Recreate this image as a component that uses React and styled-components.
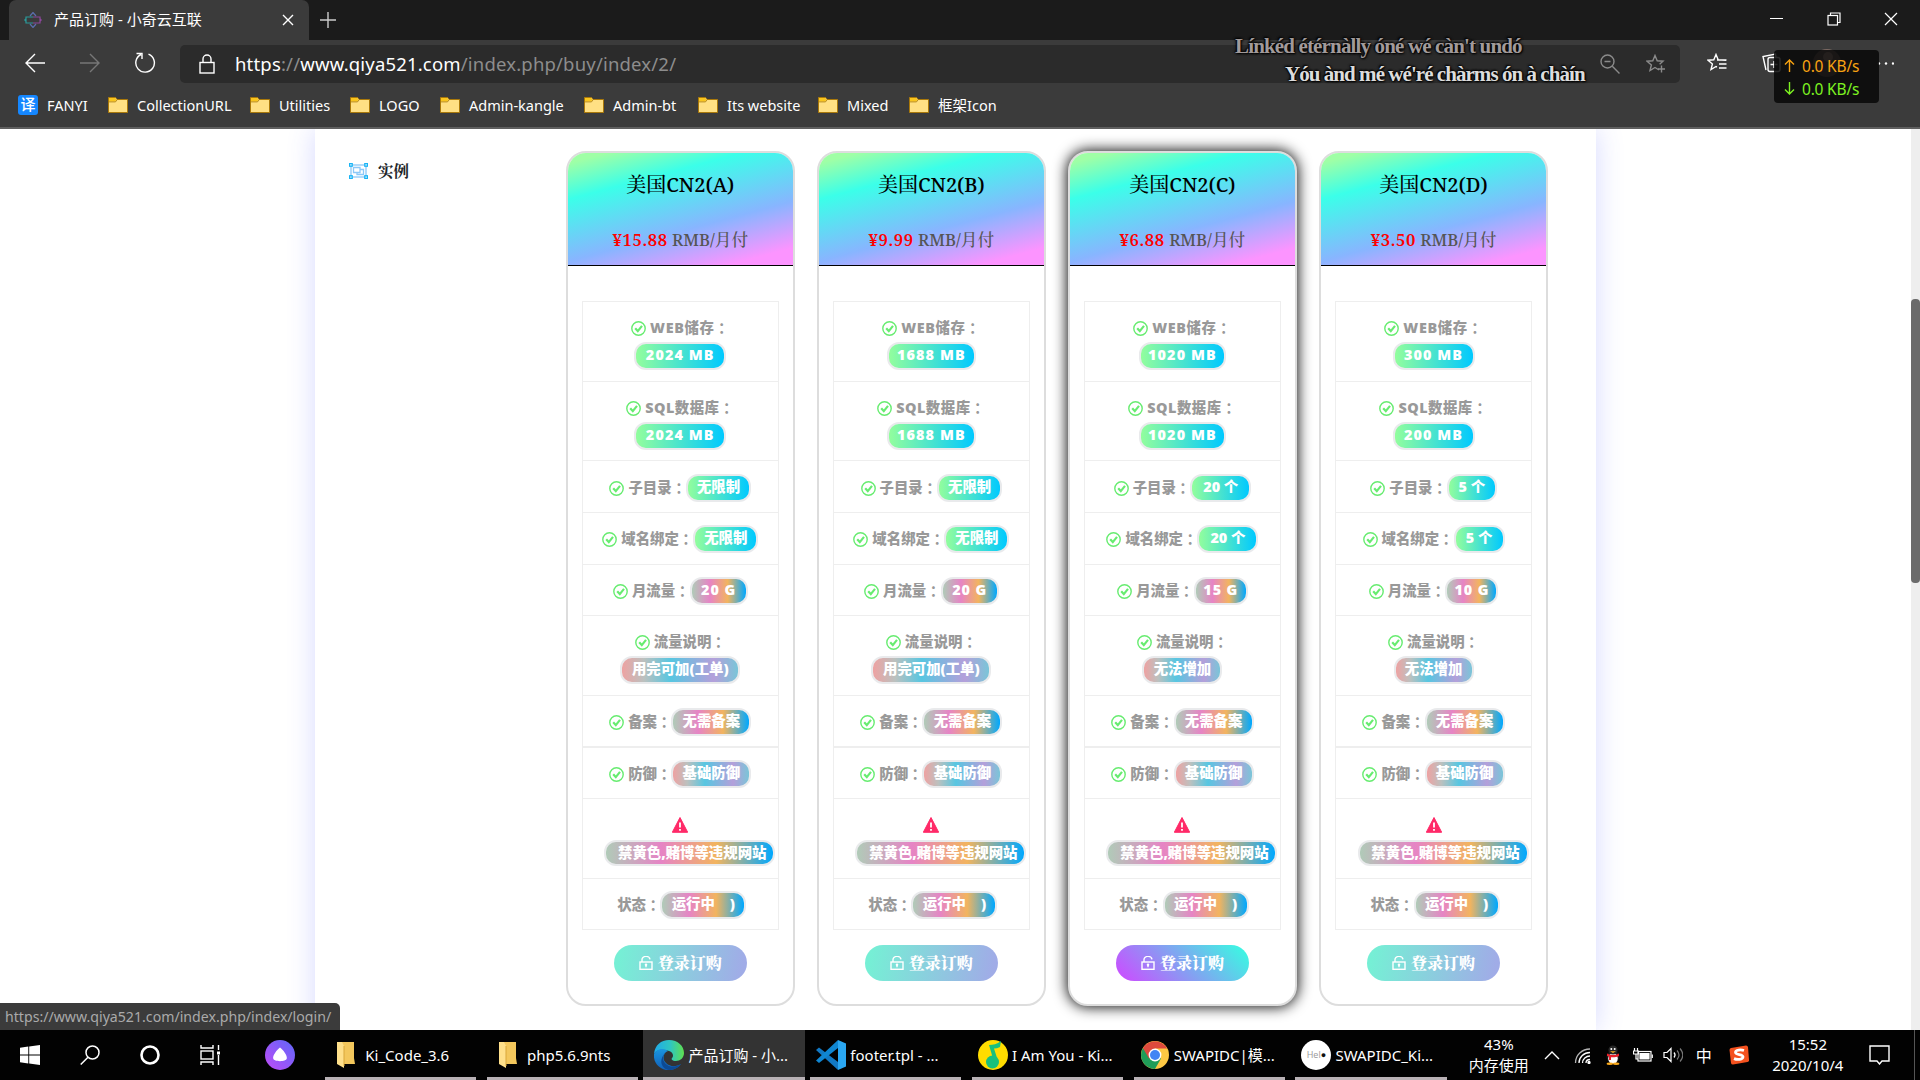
import React from 'react';
import styled, { createGlobalStyle, css } from 'styled-components';

const ui = '"Noto Sans", "Noto Sans CJK SC", sans-serif';
const serif = '"Noto Serif", "Noto Serif CJK SC", "Liberation Serif", "Noto Sans CJK SC", serif';

const GlobalStyle = createGlobalStyle`
  * { box-sizing: border-box; }
  body { margin: 0; background: #fff; font-family: ${ui}; overflow: hidden; }
  svg { display: block; flex: none; }
`;

const Screen = styled.div`
  position: relative;
  width: 1920px;
  height: 1080px;
  display: flex;
  flex-direction: column;
  overflow: hidden;
`;

/* ---------- browser chrome ---------- */
const TabStrip = styled.div`
  height: 40px;
  flex: none;
  background: #1b1b1b;
  display: flex;
  padding-left: 9px;
`;
const Tab = styled.div`
  width: 300px;
  background: #3b3b3b;
  border-radius: 7px 7px 0 0;
  display: flex;
  align-items: center;
  padding: 0 15px 0 15px;
`;
const TabTitle = styled.span`
  flex: 1;
  margin-left: 12px;
  font-size: 15px;
  line-height: 20px;
  color: #fff;
  padding-bottom: 2px;
`;
const NewTab = styled.div`
  width: 38px;
  display: flex;
  align-items: center;
  justify-content: center;
  padding-bottom: 1px;
`;
const WindowButtons = styled.div`
  margin: 0 1px 0 auto;
  display: flex;
`;
const WindowButton = styled.div`
  width: 57px;
  height: 37px;
  display: flex;
  align-items: center;
  justify-content: center;
`;
const Toolbar = styled.div`
  height: 46px;
  flex: none;
  background: #3b3b3b;
  display: flex;
  align-items: center;
  padding-left: 7px;
`;
const ToolButton = styled.div`
  width: 55px;
  flex: none;
  height: 38px;
  display: flex;
  align-items: center;
  justify-content: center;
`;
const AddressBar = styled.div`
  width: 1500px;
  flex: none;
  height: 38px;
  margin: 2px 9px 0 8px;
  background: #2b2b2b;
  border-radius: 5px;
  display: flex;
  align-items: center;
  padding: 0 1px 0 19px;
`;
const Url = styled.span`
  flex: 1;
  margin-left: 20px;
  font-size: 18.5px;
  line-height: 36px;
  letter-spacing: 0.18px;
  color: #8d8d8d;
  b { font-weight: 400; color: #fff; }
`;
const AddressIcon = styled.div`
  width: 46px;
  display: flex;
  justify-content: center;
`;
const Bookmarks = styled.div`
  height: 43px;
  flex: none;
  background: #3b3b3b;
  border-bottom: 2px solid #5f5f5f;
  display: flex;
  padding: 0 0 4px 18px;
`;
const Bookmark = styled.div`
  width: ${(p) => p.$width}px;
  display: flex;
  align-items: center;
  gap: 9px;
  color: #fff;
  font-size: 14.5px;
  white-space: nowrap;
`;
const Translate = styled.span`
  width: 20px;
  height: 20px;
  border-radius: 3px;
  background: #1587ff;
  font-size: 15px;
  line-height: 19px;
  font-weight: 500;
  text-align: center;
`;

/* ---------- page ---------- */
const Page = styled.div`
  height: 901px;
  flex: none;
  display: flex;
  justify-content: space-between;
  background: #fff;
  padding-left: 315px;
  overflow: hidden;
`;
const Panel = styled.main`
  width: 1281px;
  height: 901px;
  padding: 22px 0 0 34px;
  display: flex;
  background: #fff;
  box-shadow: 0 0 26px rgba(70, 80, 255, 0.22);
  clip-path: inset(0 -40px);
`;
const SideLabel = styled.div`
  width: 217px;
  height: 40px;
  display: flex;
  align-items: center;
  gap: 10px;
  font: 700 15.5px/20px ${serif};
  color: #212529;
`;
const Plans = styled.div`
  display: grid;
  grid-template-columns: repeat(4, 228.5px);
  column-gap: 22.6px;
  align-items: start;
`;
const Card = styled.section`
  height: 855px;
  border: 2px solid #ddd;
  border-radius: 20px;
  background: #fff;
  overflow: hidden;
  display: flex;
  flex-direction: column;
  align-items: center;
  ${(p) => p.$active && css`box-shadow: 0 0 14px 1px rgba(0, 0, 0, 0.95);`}
`;
const CardHead = styled.header`
  align-self: stretch;
  height: 113px;
  border-bottom: 1px solid #000;
  background: linear-gradient(165deg, #9fffa6 6%, #3bffe9 27%, #88b5ff 63%, #fc94ff 90%);
  text-align: center;
`;
const PlanName = styled.h3`
  margin: 19px 0 0;
  font: 500 20px/26px ${serif};
  color: #000;
`;
const Price = styled.div`
  margin-top: 30px;
  font: 500 16.7px/24px ${serif};
  color: #555;
  b { font-weight: 600; color: #f00; letter-spacing: 0.6px; }
`;
const Specs = styled.div`
  width: 197px;
  margin-top: 35px;
  border: 1px solid #eee;
  border-bottom: 0;
`;
const Row = styled.div`
  height: ${(p) => p.$height}px;
  padding-top: ${(p) => p.$top}px;
  border-bottom: ${(p) => (p.$thick ? 2 : 1)}px solid #eee;
  display: flex;
  flex-direction: ${(p) => (p.$stacked ? 'column' : 'row')};
  align-items: ${(p) => (p.$stacked ? 'center' : 'flex-start')};
  justify-content: ${(p) => (p.$stacked ? 'flex-start' : 'center')};
`;
const Label = styled.div`
  height: 28px;
  display: flex;
  align-items: center;
  font: 900 14.4px/26px "Noto Sans", "Noto Sans CJK SC", sans-serif;
  letter-spacing: ${(p) => p.$spacing || 0}px;
  color: #999;
  white-space: nowrap;
  margin-left: ${(p) => p.$indent || 0}px;
  i { font-style: normal; font-family: "Noto Sans CJK TC", sans-serif; font-weight: 700; }
`;
const CheckMark = styled.span`
  margin-right: 4px;
`;
const tones = {
  green: 'linear-gradient(to right, #92fe9d, #00c9ff)',
  warm: 'linear-gradient(to right, #b0cbb8 0%, #e684c5 33%, #f2b45f 66%, #00a8ff 100%)',
  cool: 'linear-gradient(to right, #eea2a2 0%, #bbc1bf 19%, #57c6e1 42%, #b49fda 79%, #7ac5d8 100%)',
};
const Pill = styled.span`
  width: ${(p) => p.$width}px;
  height: ${(p) => (p.$shifted ? 26 : 28)}px;
  margin: ${(p) => (p.$shifted ? '1px 0 0 19px' : '0')};
  padding-left: ${(p) => (p.$shifted ? 5 : 0)}px;
  border: 2px solid #e9eaec;
  border-radius: 12px;
  background: ${(p) => tones[p.$tone]};
  color: #fff;
  font: 900 14.4px/22px "Noto Sans", "Noto Sans CJK SC", sans-serif;
  letter-spacing: ${(p) => p.$spacing || 0}px;
  text-align: center;
  white-space: pre;
  flex: none;
`;
const Order = styled.button`
  width: 133px;
  height: 36px;
  margin-top: 15px;
  border: 0;
  border-radius: 18px;
  background: ${(p) => (p.$active
    ? 'linear-gradient(45deg, #c850ff 5%, #3cf7e3 95%)'
    : 'linear-gradient(100deg, #76efd5 5%, #a0ace7 95%)')};
  color: #fff;
  font: 900 16px/36px ${serif};
  display: flex;
  align-items: center;
  justify-content: center;
  gap: 5px;
  padding: 0;
`;
const ScrollTrack = styled.div`
  width: 9px;
  background: #eee;
  padding-top: 170px;
`;
const ScrollThumb = styled.div`
  height: 284px;
  border-radius: 4px;
  background: #6b6b6b;
`;

/* ---------- floating overlays ---------- */
const Lyric = styled.div`
  position: absolute;
  left: ${(p) => p.$left}px;
  top: ${(p) => p.$top}px;
  font: 700 21px/26px "Liberation Serif", serif;
  letter-spacing: ${(p) => p.$spacing}px;
  color: ${(p) => p.$color};
  text-shadow: 0 0 3px #000, 1px 1px 2px #000, -1px -1px 2px #000;
  white-space: nowrap;
`;
const NetMeter = styled.div`
  position: absolute;
  left: 1774px;
  top: 50px;
  width: 105px;
  height: 53px;
  border-radius: 4px;
  background: rgba(8, 8, 8, 0.86);
  padding: 4px 0 0 10px;
`;
const NetRow = styled.div`
  height: 23px;
  display: flex;
  align-items: center;
  gap: 7px;
  color: ${(p) => p.$color};
  font-size: 15.5px;
  letter-spacing: -0.2px;
`;
const StatusBubble = styled.div`
  position: absolute;
  left: 0;
  top: 1003px;
  width: 340px;
  height: 27px;
  padding-left: 5px;
  background: #3b3b3b;
  border-radius: 0 5px 0 0;
  color: #aaa;
  font-size: 14.15px;
  line-height: 27px;
  white-space: nowrap;
`;

/* ---------- taskbar ---------- */
const Taskbar = styled.div`
  height: 50px;
  flex: none;
  background: #020202;
  display: flex;
  color: #fff;
`;
const SystemButton = styled.div`
  width: ${(p) => p.$width || 60}px;
  flex: none;
  display: flex;
  align-items: center;
  justify-content: center;
`;
const Task = styled.div`
  width: 161.7px;
  flex: none;
  padding: ${(p) => (p.$active ? 0 : '0 5.3px')};
  background: ${(p) => (p.$active ? '#333' : 'transparent')};
`;
const TaskInner = styled.div`
  height: 50px;
  border-bottom: 3px solid #b8b1b5;
  padding: 2px 0 0 ${(p) => (p.$active ? 11 : 6)}px;
  display: flex;
  align-items: center;
  gap: 4px;
  font-size: 15px;
  white-space: nowrap;
`;
const TaskIcon = styled.span`
  width: 30px;
  display: flex;
  justify-content: center;
`;
const HelloBadge = styled.span`
  width: 30px;
  height: 30px;
  border-radius: 50%;
  background: #fff;
  color: #999;
  font: 9px/30px "Open Sans", sans-serif;
  text-align: center;
  b { color: #111; }
`;
const Tray = styled.div`
  flex: none;
  display: flex;
  align-items: center;
  padding-left: 16px;
`;
const Stack = styled.div`
  width: ${(p) => p.$width}px;
  display: flex;
  flex-direction: column;
  text-align: center;
  font-size: 15px;
  line-height: 21px;
`;
const TrayCell = styled.div`
  width: ${(p) => p.$width || 30}px;
  display: flex;
  justify-content: center;
  font-size: 16px;
`;
const DesktopEdge = styled.div`
  margin-left: 6px;
  width: 1px;
  height: 50px;
  background: #555;
`;

/* ---------- drawings ---------- */
const Line = ({ w = 20, h = w, box = `0 0 ${w} ${h}`, color = '#fff', sw = 1.4, d, children }) => (
  <svg width={w} height={h} viewBox={box} fill="none" stroke={color} strokeWidth={sw}>
    {d && <path d={d} />}
    {children}
  </svg>
);
const Folder = () => (
  <svg width="20" height="16" viewBox="0 0 20 16">
    <path d="M.5.5h7l1.500 2h10.500v13H.5z" fill="#ffe084" stroke="#a9780a" />
    <path d="M1 1h6.300l1 2-1 1.600H1z" fill="#f9c51e" />
    <path d="M.5 4.900h7l1.500-2" fill="none" stroke="#a9780a" strokeWidth=".8" />
  </svg>
);
const TaskFolder = () => (
  <svg width="18" height="26" viewBox="0 0 18 26">
    <path d="M4 0h13v16l1 6H4z" fill="#f3c75c" />
    <path d="M0 0h5l2 4v22L0 22z" fill="#ffe08b" />
    <path d="M7 4v20" stroke="#d9a83a" />
  </svg>
);
const Check = () => (
  <svg width="15" height="15" viewBox="0 0 15 15" fill="none" stroke="#67ec70">
    <circle cx="7.500" cy="7.500" r="6.700" strokeWidth="1.400" />
    <path d="M4.200 7.300l2.600 2.800 4.200-5.200" strokeWidth="2.200" />
  </svg>
);
const Warning = () => (
  <svg width="16" height="16" viewBox="0 0 16 16">
    <path d="M8 .5L15.700 15.300H.3z" fill="#ff2a68" stroke="#ff2a68" strokeLinejoin="round" />
    <path d="M8 5.500v5M8 12v1.800" stroke="#fff" strokeWidth="1.800" />
  </svg>
);
const Unlock = () => (
  <Line w={14} h={14} sw={1.4}>
    <rect x="1" y="6" width="12" height="7.300" />
    <path d="M3 6V4a4 3.300 0 0 1 8-.6M7 8.700v2.500" />
    <circle cx="7" cy="8.800" r=".6" />
  </Line>
);
const GroupIcon = () => (
  <Line w={19} h={16} color="#8cc8f8" sw={1.3}>
    <rect x="2" y="2" width="15" height="12" />
    <path d="M4.500 4.500h6.500v5H4.500zM11 6.500h3.500v5H8V9.500" />
    <g stroke="#19b4f5" fill="#fff">
      <rect x=".6" y=".6" width="2.600" height="2.600" /><rect x="15.800" y=".6" width="2.600" height="2.600" />
      <rect x=".6" y="12.800" width="2.600" height="2.600" /><rect x="15.800" y="12.800" width="2.600" height="2.600" />
    </g>
  </Line>
);

const EdgeLogo = () => (
  <svg width="30" height="30" viewBox="0 0 30 30">
    <defs>
      <linearGradient id="eg" x1="0" x2="1"><stop offset="0" stopColor="#1fa9ea" /><stop offset=".55" stopColor="#2fc6c0" /><stop offset="1" stopColor="#5fe04f" /></linearGradient>
      <linearGradient id="eb" y1="0" y2="1" x1="0" x2="0"><stop offset="0" stopColor="#1a95e0" /><stop offset="1" stopColor="#1160b8" /></linearGradient>
    </defs>
    <path d="M0 14C1 5 7 0 15 0c9 0 15 6 15 13 0 5-4 8-8 8-4 0-5-2-4-3 2-2 1-6-3-7C9 9 3 9 0 14z" fill="url(#eg)" />
    <path d="M0 14c3-6 10-6 14-3-5 2-6 8-2 12 4 4 10 4 15 1-3 4-8 6-12 6C6 30-1 23 0 14z" fill="url(#eb)" />
    <path d="M11 13c-4 5-1 11 4 13 4 1.500 9 0 12-2-3 4-8 6-12 6-7-1-11-9-4-17z" fill="#0c4a94" />
  </svg>
);
const CodeLogo = () => (
  <svg width="30" height="30" viewBox="0 0 30 30">
    <path d="M0 10l3-2.500L22 22v8z" fill="#1279c4" />
    <path d="M0 20.500L3 23 22 8V0z" fill="#0f86d2" />
    <path d="M22 0l8 3.500v23L22 30z" fill="#2aa7f2" />
  </svg>
);
const MusicLogo = () => (
  <svg width="30" height="30" viewBox="0 0 30 30">
    <circle cx="15" cy="15" r="15" fill="#ffdc00" />
    <circle cx="14.500" cy="22" r="6.500" fill="#18c07c" />
    <path d="M11 5c4 0 8-1 12-4l-1 6c-2 1-4 1.500-6 1.500L20 21l-4 1z" fill="#18c07c" />
  </svg>
);
const ChromeLogo = () => (
  <svg width="28" height="28" viewBox="0 0 28 28">
    <circle cx="14" cy="14" r="14" fill="#fdc843" />
    <path d="M14 14L1.900 7A14 14 0 0 0 14 28l6-10.500z" fill="#1f9d58" />
    <path d="M1.900 7A14 14 0 0 1 26.100 7.500H14v6.500L8 17.500z" fill="#de4a3d" />
    <circle cx="14" cy="14" r="6.400" fill="#fff" /><circle cx="14" cy="14" r="5" fill="#4285f4" />
  </svg>
);
const Penguin = () => (
  <svg width="16" height="20" viewBox="0 0 16 20">
    <ellipse cx="8" cy="12" rx="6.500" ry="6.500" fill="#161616" /><ellipse cx="8" cy="13.500" rx="4.800" ry="5.200" fill="#fff" />
    <circle cx="8" cy="5" r="4.600" fill="#262626" /><circle cx="6.300" cy="4" r="1" fill="#fff" /><circle cx="9.700" cy="4" r="1" fill="#fff" />
    <path d="M5 6.300h6L8 8z" fill="#fbb320" /><path d="M2 8.500c4 2 8 2 12 0v2.500c-3 1.500-6 1.500-8 1.200V15H4v-3.500L2 11z" fill="#e8202a" />
    <ellipse cx="4.800" cy="18.700" rx="3.200" ry="1.200" fill="#f9a81a" /><ellipse cx="11.200" cy="18.700" rx="3.200" ry="1.200" fill="#f9a81a" />
  </svg>
);

/* ---------- data ---------- */
const bookmarks = [
  ['CollectionURL', 142], ['Utilities', 100], ['LOGO', 90], ['Admin-kangle', 144],
  ['Admin-bt', 114], ['Its website', 120], ['Mixed', 91], ['框架Icon', 90],
];
const plans = [
  { id: 'A', price: '15.88', web: ['2024 MB', 92], sql: ['2024 MB', 92], dir: ['无限制', 65], dom: ['无限制', 65], flow: ['20 G', 58], note: ['用完可加(工单)', 120] },
  { id: 'B', price: '9.99', web: ['1688 MB', 89], sql: ['1688 MB', 89], dir: ['无限制', 65], dom: ['无限制', 65], flow: ['20 G', 58], note: ['用完可加(工单)', 120] },
  { id: 'C', price: '6.88', active: true, web: ['1020 MB', 87], sql: ['1020 MB', 87], dir: ['20 个', 61], dom: ['20 个', 61], flow: ['15 G', 54], note: ['无法增加', 80] },
  { id: 'D', price: '3.50', web: ['300 MB', 82], sql: ['200 MB', 82], dir: ['5 个', 50], dom: ['5 个', 51], flow: ['10 G', 53], note: ['无法增加', 80] },
];
const rowsOf = (p) => [
  { h: 80, top: 12, label: 'WEB储存', spacing: 0.6, value: p.web, valueSpacing: 1.1, tone: 'green', stacked: true },
  { h: 79, top: 12, label: 'SQL数据库', spacing: 0.5, value: p.sql, valueSpacing: 1.1, tone: 'green', stacked: true },
  { h: 52, top: 13, label: '子目录', value: p.dir, tone: 'green' },
  { h: 52, top: 12, label: '域名绑定', value: p.dom, tone: 'green' },
  { h: 51, top: 12, label: '月流量', value: p.flow, valueSpacing: 0.9, tone: 'warm' },
  { h: 80, top: 12, label: '流量说明', value: p.note, tone: 'cool', stacked: true },
  { h: 52, top: 12, label: '备案', value: ['无需备案', 80], tone: 'warm', thick: true },
  { h: 51, top: 12, label: '防御', value: ['基础防御', 80], tone: 'cool' },
];
const tasks = [
  [<TaskFolder />, 'Ki_Code_3.6'], [<TaskFolder />, 'php5.6.9nts'], [<EdgeLogo />, '产品订购 - 小...', true],
  [<CodeLogo />, 'footer.tpl - ...'], [<MusicLogo />, 'I Am You - Ki...'], [<ChromeLogo />, 'SWAPIDC|模...'],
  [<HelloBadge>Hel<b>●</b></HelloBadge>, 'SWAPIDC_Ki...'],
];

function PlanCard({ plan }) {
  return (
    <Card $active={plan.active}>
      <CardHead>
        <PlanName>美国CN2({plan.id})</PlanName>
        <Price><b>¥{plan.price}</b> RMB/月付</Price>
      </CardHead>
      <Specs>
        {rowsOf(plan).map((r) => (
          <Row key={r.label} $height={r.h} $top={r.top} $stacked={r.stacked} $thick={r.thick}>
            <Label $spacing={r.spacing}><CheckMark><Check /></CheckMark>{r.label}<i>：</i></Label>
            <Pill $width={r.value[1]} $tone={r.tone} $spacing={r.valueSpacing}>{r.value[0]}</Pill>
          </Row>
        ))}
        <Row $height={80} $top={12} $stacked>
          <Label><Warning /></Label>
          <Pill $width={171} $tone="warm" $shifted>禁黄色,赌博等违规网站</Pill>
        </Row>
        <Row $height={51} $top={12}>
          <Label $indent={3}>状态<i>：</i></Label>
          <Pill $width={86} $tone="warm">{'运行中    )'}</Pill>
        </Row>
      </Specs>
      <Order $active={plan.active}><Unlock />登录订购</Order>
    </Card>
  );
}

export default function App() {
  return (
    <Screen>
      <GlobalStyle />
      <TabStrip>
        <Tab>
          <Line w={18} h={16} color="#5b6fae" sw={1.2}>
            <path d="M6 4l3-3.500L12 4M6 12l3 3.500 3-3.500" />
            <path d="M9 5H2v6h7M2 6.500L.8 8 2 9.500" stroke="#2b9a9a" /><path d="M9 5h7v6H9M16 6.500L17.200 8 16 9.500" stroke="#8d479c" />
          </Line>
          <TabTitle>产品订购 - 小奇云互联</TabTitle>
          <Line w={12} d="M1 1l10 10M11 1L1 11" />
        </Tab>
        <NewTab><Line w={16} color="#ccc" d="M8 0v16M0 8h16" /></NewTab>
        <WindowButtons>
          <WindowButton><Line w={13} h={1} sw={1} d="M0 .5h13" /></WindowButton>
          <WindowButton><Line w={14} sw={1.2}><rect x="1" y="3.500" width="9.500" height="9.500" /><path d="M3.500 3.500V1H13v9.500h-2.500" /></Line></WindowButton>
          <WindowButton><Line w={14} sw={1.2} d="M1 1l12 12M13 1L1 13" /></WindowButton>
        </WindowButtons>
      </TabStrip>
      <Toolbar>
        <ToolButton><Line w={20} d="M20 10H1M10 1L1 10l9 9" /></ToolButton>
        <ToolButton><Line w={20} color="#777" d="M0 10h19M10 1l9 9-9 9" /></ToolButton>
        <ToolButton><Line w={22} d="M14.500 2.200A9.300 9.300 0 1 1 7 2.500M2.500 1.500H8v5.500" /></ToolButton>
        <AddressBar>
          <Line w={16} h={20}><rect x="1" y="8.500" width="14" height="10.500" /><path d="M4 8.500V5a4 4 0 0 1 8 0v3.500" /></Line>
          <Url><b>https</b>://<b>www.qiya521.com</b>/index.php/buy/index/2/</Url>
          <AddressIcon><Line w={20} color="#8b8b8b"><circle cx="7.500" cy="7.500" r="6.500" /><path d="M4.500 7.500h6M12.300 12.300L19.500 19.500" /></Line></AddressIcon>
          <AddressIcon><Line w={21} h={20} color="#8b8b8b"><path d="M13 16l-4-2.500-5 3 1.400-5.600L1 7.200l5.800-.4L9 1.500l2.200 5.300 5.800.4-3.400 3M15.500 11.500v7M12 15h7" /></Line></AddressIcon>
        </AddressBar>
        <ToolButton><Line w={20}><path d="M10 14l-1-.5-5 3 1.400-5.600L1 7.200l5.800-.4L9 1.500l2.200 5.300 7.800.4M12 11h7.500M12 15h7.500M10 7h9.500" /></Line></ToolButton>
        <ToolButton><Line w={20}><path d="M4 17L1 3.500 13.500 1l.5 3" /><rect x="6" y="4.500" width="12" height="14" rx="2" /><path d="M12 8v7M8.500 11.500h7" /></Line></ToolButton>
        <ToolButton><svg width="28" height="28"><circle cx="14" cy="14" r="14" fill="#7d6a63" /><circle cx="15" cy="8" r="5" fill="#c9a99a" /></svg></ToolButton>
        <ToolButton><Line w={24} h={3}><g fill="#fff" stroke="none"><circle cx="9" cy="1.500" r="1.200" /><circle cx="16" cy="1.500" r="1.200" /><circle cx="23" cy="1.500" r="1.200" /></g></Line></ToolButton>
      </Toolbar>
      <Bookmarks>
        <Bookmark $width={90}><Translate>译</Translate>FANYI</Bookmark>
        {bookmarks.map(([name, width]) => <Bookmark key={name} $width={width}><Folder />{name}</Bookmark>)}
      </Bookmarks>

      <Page>
        <Panel>
          <SideLabel><GroupIcon />实例</SideLabel>
          <Plans>{plans.map((p) => <PlanCard key={p.id} plan={p} />)}</Plans>
        </Panel>
        <ScrollTrack><ScrollThumb /></ScrollTrack>
      </Page>

      <Taskbar>
        <SystemButton><svg width="20" height="20" fill="#fff"><path d="M0 2.800l8.300-1.200v7.900H0zM9.200 1.500L20 0v9.500H9.200zM0 10.500h8.300v7.900L0 17.200zM9.200 10.500H20V20L9.200 18.500z" /></svg></SystemButton>
        <SystemButton><Line w={20} sw={1.5}><circle cx="12.500" cy="7.500" r="6.500" /><path d="M8 12.200L.7 19.500" /></Line></SystemButton>
        <SystemButton><Line w={20} sw={2.6}><circle cx="10" cy="10" r="8.500" /></Line></SystemButton>
        <SystemButton><Line w={21} h={20}><path d="M1 0v3h12V0M1 20v-3h12v3M18.500 0v5M18.500 10v10" /><rect x="1" y="6" width="12" height="8" /><path d="M17 8h3" strokeWidth="3" /></Line></SystemButton>
        <SystemButton $width={80}>
          <svg width="30" height="30"><defs><linearGradient id="al" x1="0" y1="1" x2="1" y2="0"><stop stopColor="#c04cf6" /><stop offset="1" stopColor="#5d67fa" /></linearGradient></defs>
            <circle cx="15" cy="15" r="15" fill="url(#al)" /><path d="M15 7.500c3 2 7.500 8 6.800 11-.6 3.500-13 3.500-13.600 0-.7-3 3.800-9 6.800-11z" fill="#fff" /></svg>
        </SystemButton>
        {tasks.map(([icon, name, active]) => (
          <Task key={name} $active={active}><TaskInner $active={active}><TaskIcon>{icon}</TaskIcon>{name}</TaskInner></Task>
        ))}
        <Tray>
          <Stack $width={62}><span>43%</span><span>内存使用</span></Stack>
          <TrayCell $width={44}><Line w={16} h={9} d="M1 8l7-7 7 7" /></TrayCell>
          <TrayCell $width={18}><Line w={17} h={17} sw={1.3}><path d="M1.500 16C1.500 8 8 2 16 2" opacity=".7" /><path d="M5 16C5 10 10 5.500 16 5.500M8.500 16c0-4 3.500-7 7.500-7" /><path d="M12 16c0-2 1.500-3.500 4-3.500" /><circle cx="15" cy="15.500" r="1" fill="#fff" /></Line></TrayCell>
          <TrayCell $width={42}><Penguin /></TrayCell>
          <TrayCell $width={18}><Line w={20} h={15} sw={1.2}><rect x="5" y="3.500" width="13" height="9.500" /><path d="M7 5.500h9v5.500H7z" fill="#fff" /><path d="M19.300 6.500v3.500M1.500 0v3M4.500 0v3M.5 3h5v3h-5zM3 6v5h2" /></Line></TrayCell>
          <TrayCell $width={42}><Line w={20} h={16} sw={1.2}><path d="M1 5.500h3l4-4v13l-4-4H1zM11 5.500c1.300 1.500 1.300 3.500 0 5" /><path d="M14 3.500c2.500 2.800 2.500 6.200 0 9M17 1.500c3.500 4 3.500 9 0 13" stroke="#777" /></Line></TrayCell>
          <TrayCell $width={20}>中</TrayCell>
          <TrayCell $width={50}>
            <svg width="20" height="20" viewBox="0 0 20 20"><path d="M2 3L17 .5a2 2 0 0 1 2 1.500l1 13a2 2 0 0 1-1.500 2L4 19.500a2 2 0 0 1-2-1.500L.5 5A2 2 0 0 1 2 3z" fill="#f4511e" /><path d="M15 5.500c-3-1-8.500-.8-8.500 1.800 0 3 7.500 1.500 7.500 4.500 0 3-6 3-9 1.800" fill="none" stroke="#fff" strokeWidth="2.800" /></svg>
          </TrayCell>
          <Stack $width={88}><span>15:52</span><span>2020/10/4</span></Stack>
          <TrayCell $width={56}><Line w={21} h={20} d="M1 1h19v15h-7l-2.500 3L8 16H1z" /></TrayCell>
        </Tray>
        <DesktopEdge />
      </Taskbar>

      <Lyric $left={1235} $top={33} $spacing={-0.85} $color="#a19a9a">Línkéd étérnàlly óné wé càn't undó</Lyric>
      <Lyric $left={1285} $top={61} $spacing={-0.95} $color="#dcdcdc">Yóu ànd mé wé'ré chàrms ón à chàín</Lyric>
      <NetMeter>
        <NetRow $color="#f8a312"><Line w={11} h={13} color="#f8a312" d="M5.500 13V1M1 5.500L5.500 1 10 5.500" />0.0 KB/s</NetRow>
        <NetRow $color="#7df221"><Line w={11} h={13} color="#7df221" d="M5.500 0v12M1 7.500L5.500 12 10 7.500" />0.0 KB/s</NetRow>
      </NetMeter>
      <StatusBubble>https://www.qiya521.com/index.php/index/login/</StatusBubble>
    </Screen>
  );
}
